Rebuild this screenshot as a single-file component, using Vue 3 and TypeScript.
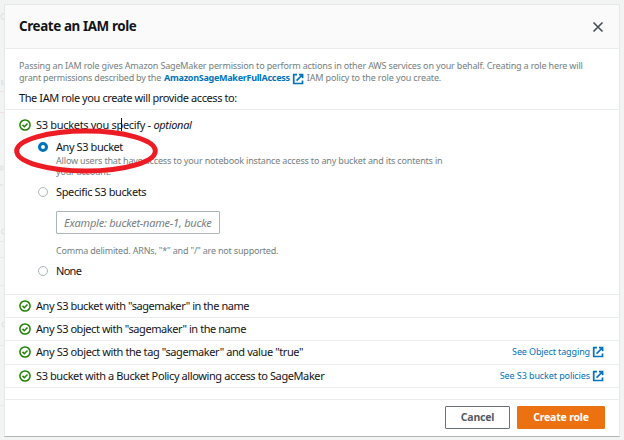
<script setup lang="ts">
import { ref } from 'vue'

interface AccessRow {
  label: string
  fit: string
  link?: string
  linkFit?: string
}

const selected = ref<'any' | 'specific' | 'none'>('any')

const rows: AccessRow[] = [
  { label: 'Any S3 bucket with "sagemaker" in the name', fit: 'r1' },
  { label: 'Any S3 object with "sagemaker" in the name', fit: 'r2' },
  { label: 'Any S3 object with the tag "sagemaker" and value "true"', fit: 'r3', link: 'See Object tagging', linkFit: 'l1' },
  { label: 'S3 bucket with a Bucket Policy allowing access to SageMaker', fit: 'r4', link: 'See S3 bucket policies', linkFit: 'l2' },
]
</script>

<template>
  <div class="page">
    <svg class="behind" viewBox="0 0 4 440" aria-hidden="true">
      <path class="warm" d="M0 91.5h4M0 112.5h4" />
      <path class="cool" d="M0 241.5h4M0 257.5h4M0 285.5h4M0 345.5h4M0 405.5h4" />
      <path class="glyph" d="M4 13.5a3 3 0 0 0 0 6M0 168a1.5 2 0 0 0 3 0a1.5 2 0 0 0-3 0M0 185h3M4 229a2.5 2.5 0 0 0 0 5M4 322a2 2.5 0 0 0 0 5" />
      <path class="link" d="M3 80.5H1.5v2H3v2H1" />
    </svg>
    <section class="modal">
      <header class="head">
        <h1>Create an IAM role</h1>
        <svg class="close" viewBox="0 0 12 12"><path d="M1.5 1.5l9 9M10.5 1.5l-9 9" /></svg>
      </header>

      <div class="intro">
        <p class="muted"><span class="p1">Passing an IAM role gives Amazon SageMaker permission to perform actions in other AWS services on your behalf. Creating a role here will</span></p>
        <p class="muted second">
          <span class="p2">grant permissions described by the</span>
          <b class="p3">AmazonSageMakerFullAccess</b>
          <svg class="ext" viewBox="0 0 12 12"><path d="M5 1.7H1.7v8.8h8.8V7.5M7 1.6h3.6V5.2M10.2 2L4.6 7.6" /></svg>
          <span class="p4">IAM policy to the role you create.</span>
        </p>
        <h2><span class="p5">The IAM role you create will provide access to:</span></h2>
      </div>

      <div class="choices">
        <div class="line title">
          <svg class="check" viewBox="0 0 12 12"><circle cx="6" cy="6" r="5.1" /><path d="M3.5 5.9l1.8 1.8 3.2-3.2" /></svg>
          <span class="c1">S3 buckets you specify - <em>optional</em></span>
          <i class="caret"></i>
        </div>
        <label class="line option first" @click="selected = 'any'">
          <i class="radio" :class="{ on: selected === 'any' }"></i><span class="c2">Any S3 bucket</span>
        </label>
        <p class="hint"><span class="c3">Allow users that have access to your notebook instance access to any bucket and its contents in</span></p>
        <p class="hint"><span class="c4">your account.</span></p>
        <label class="line option specific" @click="selected = 'specific'">
          <i class="radio" :class="{ on: selected === 'specific' }"></i><span class="c5">Specific S3 buckets</span>
        </label>
        <div class="field"><span class="c6">Example: bucket-name-1, bucke</span></div>
        <p class="hint"><span class="c7">Comma delimited. ARNs, "*" and "/" are not supported.</span></p>
        <label class="line option none" @click="selected = 'none'">
          <i class="radio" :class="{ on: selected === 'none' }"></i><span class="c8">None</span>
        </label>
        <svg class="ring" viewBox="0 0 148 50"><ellipse cx="74" cy="25" rx="69.3" ry="20" /></svg>
      </div>

      <div v-for="row in rows" :key="row.label" class="row">
        <svg class="check" viewBox="0 0 12 12"><circle cx="6" cy="6" r="5.1" /><path d="M3.5 5.9l1.8 1.8 3.2-3.2" /></svg>
        <span :class="row.fit">{{ row.label }}</span>
        <a v-if="row.link"><span :class="row.linkFit">{{ row.link }}</span>
          <svg class="ext" viewBox="0 0 12 12"><path d="M5 1.7H1.7v8.8h8.8V7.5M7 1.6h3.6V5.2M10.2 2L4.6 7.6" /></svg>
        </a>
      </div>
      <div class="spacer"></div>
      <footer>
        <button class="cancel"><span class="b1">Cancel</span></button>
        <button class="create"><span class="b2">Create role</span></button>
      </footer>
    </section>
  </div>
</template>

<style>
body { margin: 0; overflow: hidden; }
</style>

<style scoped>
* { box-sizing: border-box; }
.page { position: relative; width: 624px; height: 440px; padding: 4px 4px 0; background: #f2f3f3; color: #111419; font-family: "Noto Sans", "Open Sans", sans-serif; font-size: 11px; }
span, b, h1 { white-space: nowrap; }
p, h1, h2 { margin: 0; font-weight: 400; }
.behind { position: absolute; left: 0; top: 0; width: 4px; height: 440px; }
.behind path { fill: none; stroke-width: 1; }
.warm { stroke: #f2deda; }
.cool { stroke: #e6e9e9; }
.glyph { stroke: #dadddd; }
.link { stroke: #d3e3ec; }
.modal { width: 616px; height: 433px; background: #fff; border: 1px solid #e5e8e8; border-bottom: 1px solid #aeb5b5; position: relative; }
.head { height: 44px; background: #fafafa; border-bottom: 1px solid #eaeded; display: flex; align-items: center; justify-content: space-between; padding: 0 15px 0 14px; }
.head h1 { font-size: 13.4px; font-weight: 700; letter-spacing: -0.39px; line-height: 18px; padding-bottom: 1px; }
.close { width: 12px; height: 12px; }
.close path { stroke: #454d57; stroke-width: 1.6; fill: none; }
.intro { height: 61px; border-bottom: 1px solid #eaeded; padding: 11px 14px 0; }
.muted { color: #748080; font-size: 9px; height: 12px; line-height: 12px; display: flex; }
.muted b { color: #0073bb; margin-left: 3px; }
.muted .ext { margin: 1px 3px 0 2px; }
.ext { width: 12px; height: 12px; flex: none; }
.ext path { fill: none; stroke: #0073bb; stroke-width: 1.7; }
h2 { font-size: 11px; line-height: 16px; margin-top: 6px; }
.choices { position: relative; height: 185px; border-bottom: 1px solid #eaeded; padding: 7px 14px 0; }
.line { height: 16px; line-height: 16px; display: flex; align-items: center; }
.title { position: relative; }
.check { width: 12px; height: 12px; flex: none; margin-right: 5px; }
.check circle, .check path { fill: none; stroke: #1d8102; stroke-width: 1.5; }
.caret { position: absolute; left: 102px; top: 1px; width: 1px; height: 13px; background: #111; }
.option { padding-left: 19px; }
.first { margin-top: 6px; }
.radio { width: 10px; height: 10px; border: 1px solid #aab7b8; border-radius: 50%; margin-right: 8px; flex: none; background: #fff; }
.radio.on { border: 3px solid #0073bb; }
.hint { padding-left: 37px; font-size: 9px; line-height: 11px; height: 11px; color: #748080; }
.specific { margin-top: 7px; }
.field { margin: 11px 0 11px 37px; width: 164px; height: 23px; border: 1px solid #aab7b8; border-radius: 1px; line-height: 21px; padding-left: 7px; font-style: italic; color: #76807f; }
.none { margin-top: 7px; }
.ring { position: absolute; left: 7px; top: 16px; width: 148px; height: 50px; }
.ring ellipse { fill: none; stroke: #ed1c24; stroke-width: 5; }
.row { height: 23.2px; border-bottom: 1px solid #eaeded; padding: 0 15px 0 14px; display: flex; align-items: center; line-height: 16px; }
.row a { margin-left: auto; display: flex; align-items: center; gap: 2px; color: #0073bb; font-size: 9px; }
.spacer { height: 12px; border-bottom: 1px solid #eaeded; }
footer { display: flex; justify-content: flex-end; gap: 7px; padding: 6px 14px 0 0; }
button { height: 23px; padding: 0; font: 700 10.5px "Noto Sans", sans-serif; border-radius: 1px; border: 1px solid #687078; background: #fff; color: #545b64; }
.cancel { width: 65px; }
.create { width: 88px; background: #ec7211; border-color: #ec7211; color: #fff; }
.p1 { letter-spacing: -0.163px; }
.p2, .c4 { letter-spacing: -0.2px; }
.p3 { letter-spacing: -0.28px; }
.p4 { letter-spacing: -0.13px; }
.p5 { letter-spacing: -0.41px; }
.c1 { letter-spacing: -0.31px; }
.c2 { letter-spacing: -0.42px; }
.c3 { letter-spacing: -0.168px; }
.c5 { letter-spacing: -0.37px; }
.c6 { letter-spacing: -0.23px; }
.c7 { letter-spacing: -0.19px; }
.c8 { letter-spacing: -0.7px; }
.r1, .r2 { letter-spacing: -0.44px; }
.r3 { letter-spacing: -0.41px; }
.r4 { letter-spacing: -0.4px; }
.l1 { letter-spacing: -0.12px; }
.l2 { letter-spacing: -0.1px; }
.b1, .b2 { letter-spacing: -0.2px; }
</style>
